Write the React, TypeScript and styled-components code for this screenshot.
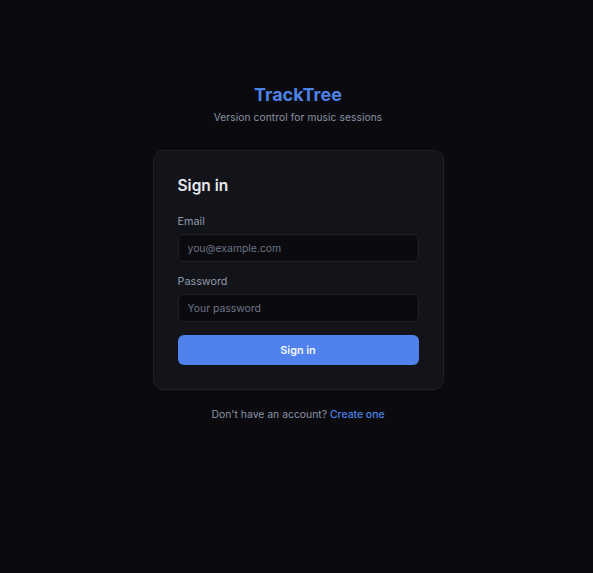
import React from 'react';
import styled, { createGlobalStyle } from 'styled-components';

const GlobalStyle = createGlobalStyle`
  html, body {
    margin: 0;
    padding: 0;
    background: #0b0b0f;
    font-family: Inter, 'Noto Sans', sans-serif;
  }
  * { box-sizing: border-box; }
`;

const Page = styled.div`
  min-height: 573px;
  display: flex;
  flex-direction: column;
  align-items: center;
  padding: 81px 0 0 3px;
`;

const Brand = styled.h1`
  margin: 0;
  font-size: 18px;
  line-height: 28px;
  font-weight: 700;
  color: #4d82e8;
`;

const Tagline = styled.p`
  margin: 0;
  font-size: 10.2px;
  line-height: 16px;
  letter-spacing: 0.1px;
  color: #8a93a6;
`;

const Card = styled.form`
  margin-top: 25px;
  width: 291px;
  padding: 24px 24px 24px;
  background: #131419;
  border: 1px solid #1f2129;
  border-radius: 10px;
  display: flex;
  flex-direction: column;
`;

const CardTitle = styled.h2`
  margin: 0;
  font-size: 15.5px;
  line-height: 22px;
  font-weight: 600;
  color: #e6e8ee;
`;

const Label = styled.label<{ $top: number }>`
  margin-top: ${p => p.$top}px;
  margin-bottom: 4px;
  font-size: 10.8px;
  line-height: 16px;
  color: #8f98ab;
`;

const Input = styled.input`
  height: 28px;
  width: 100%;
  padding: 0 9px;
  background: #0b0b0f;
  border: 1px solid #20222a;
  border-radius: 6px;
  color: #e6e8ee;
  font-family: inherit;
  font-size: 10.4px;
  outline: none;

  &::placeholder {
    color: #6b7385;
  }
`;

const SubmitButton = styled.button`
  margin-top: 13px;
  height: 30px;
  width: 100%;
  border: none;
  border-radius: 6px;
  background: #4f82ec;
  color: #f4f7ff;
  font-family: inherit;
  font-size: 10.8px;
  font-weight: 600;
  cursor: pointer;
`;

const Footer = styled.p`
  margin: 17px 0 0;
  font-size: 10.4px;
  line-height: 16px;
  color: #8a93a6;
`;

const FooterLink = styled.a`
  color: #4d82e8;
  font-weight: 500;
  text-decoration: none;
  cursor: pointer;
`;

export default function App() {
  return (
    <>
      <GlobalStyle />
      <Page>
        <Brand>TrackTree</Brand>
        <Tagline>Version control for music sessions</Tagline>
        <Card onSubmit={e => e.preventDefault()}>
          <CardTitle>Sign in</CardTitle>
          <Label $top={17}>Email</Label>
          <Input type="email" placeholder="you@example.com" />
          <Label $top={12}>Password</Label>
          <Input type="password" placeholder="Your password" />
          <SubmitButton type="submit">Sign in</SubmitButton>
        </Card>
        <Footer>
          Don't have an account? <FooterLink>Create one</FooterLink>
        </Footer>
      </Page>
    </>
  );
}
